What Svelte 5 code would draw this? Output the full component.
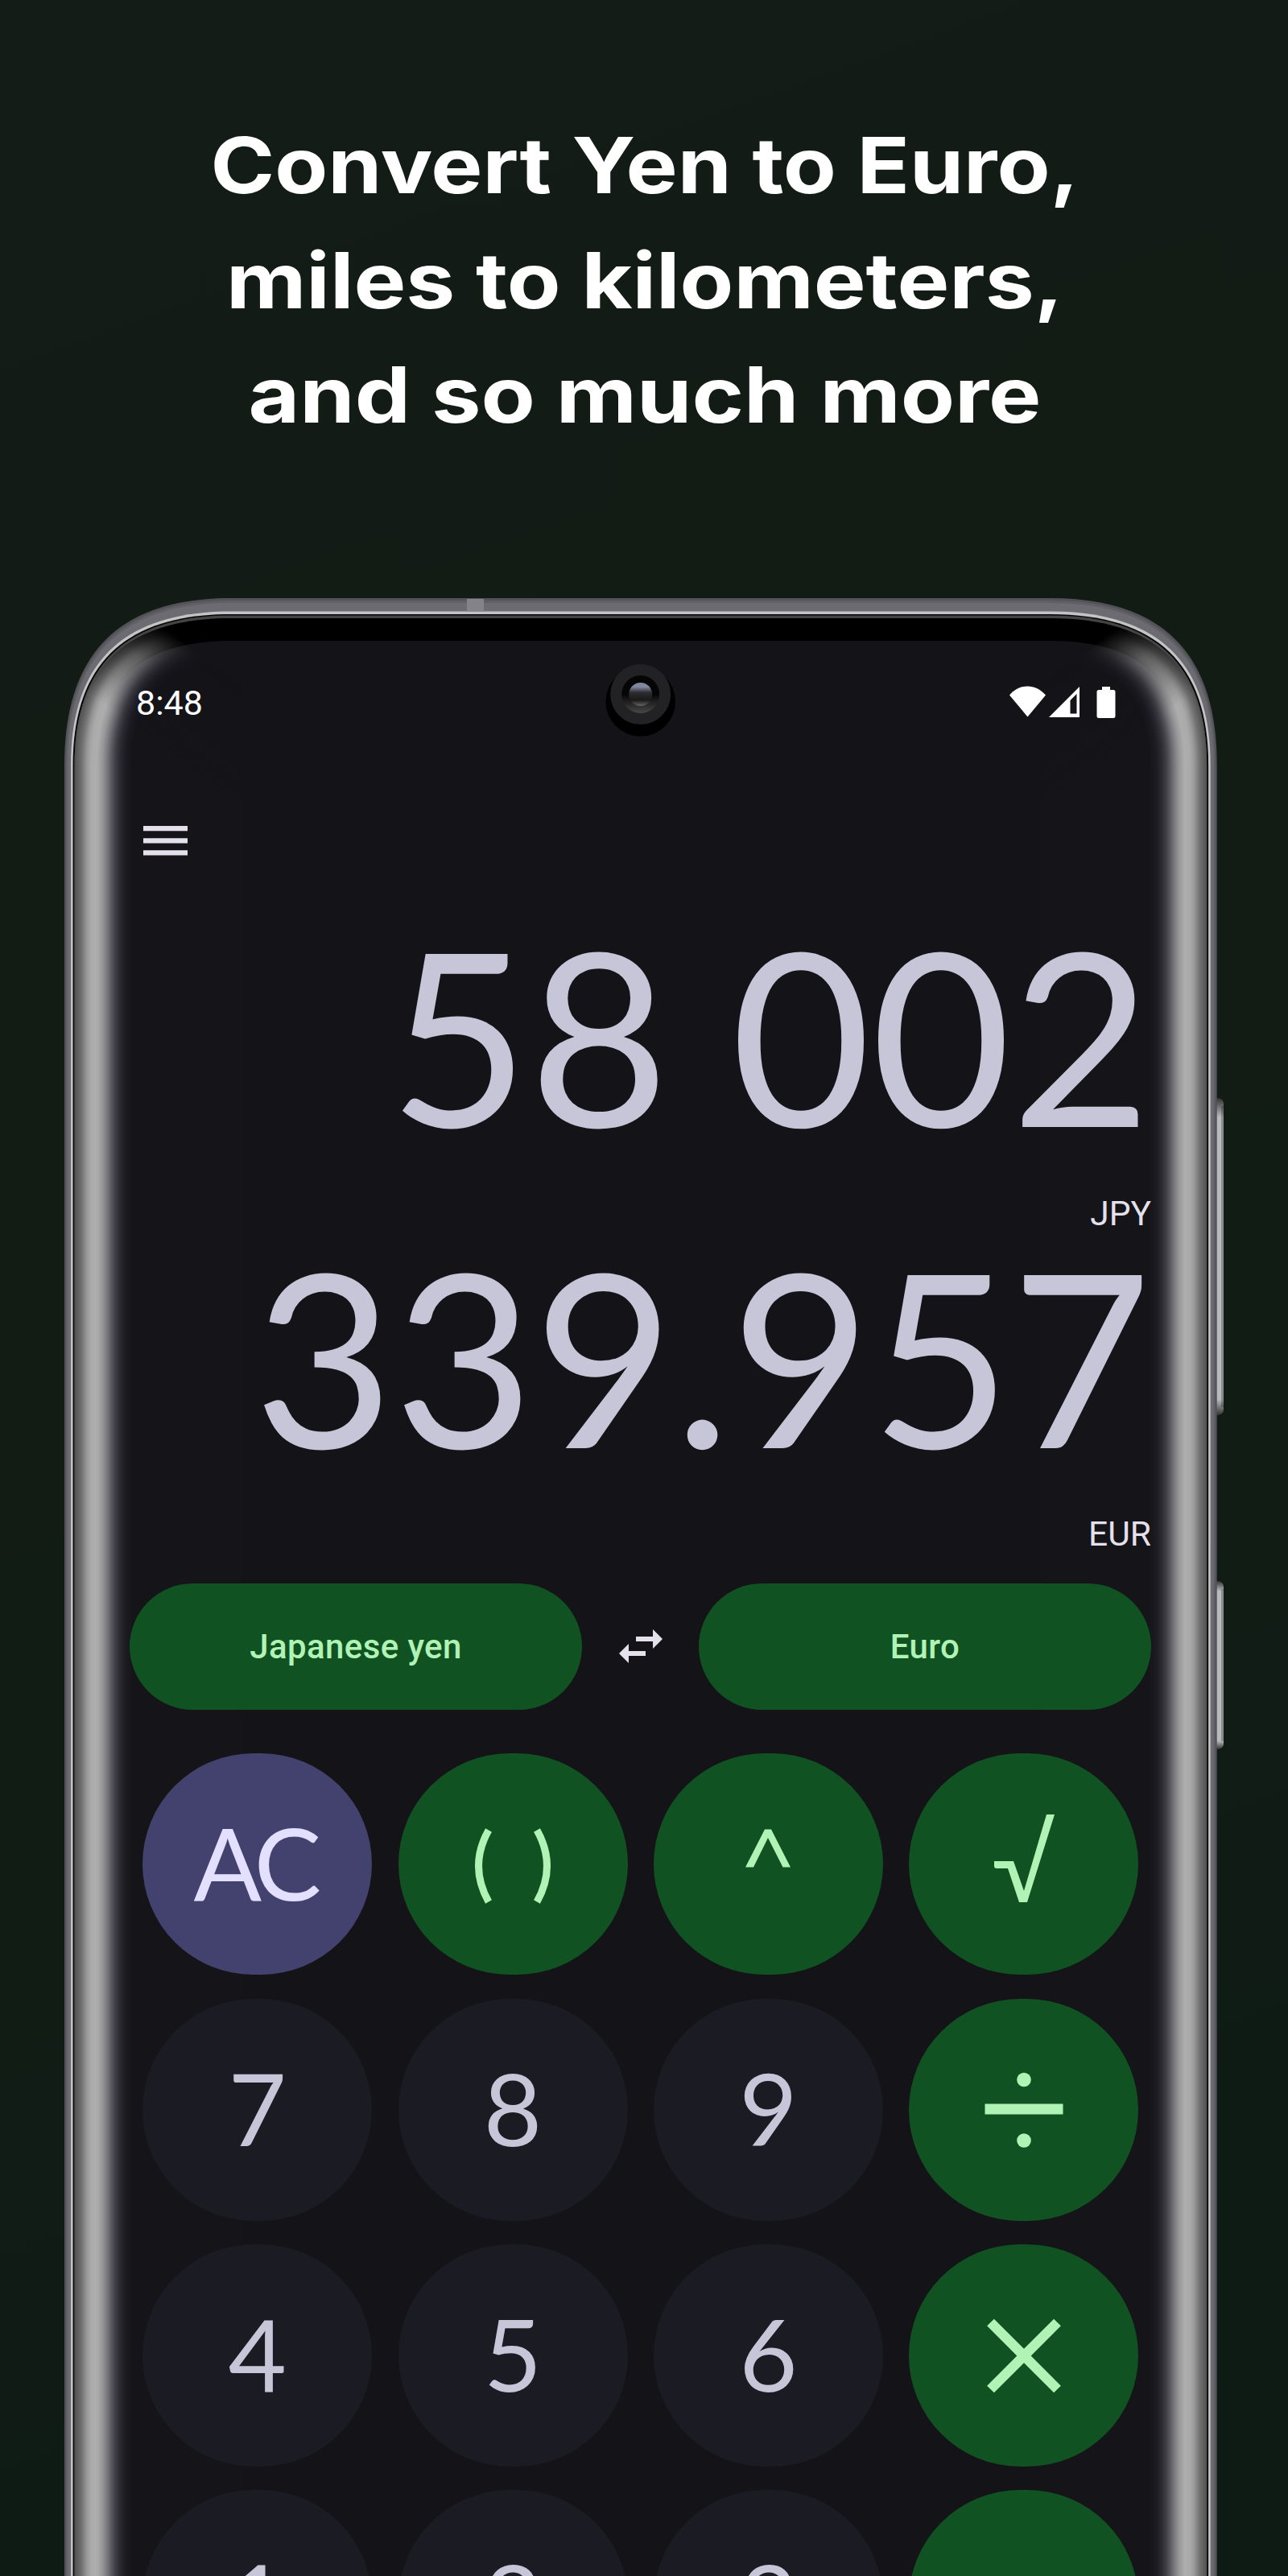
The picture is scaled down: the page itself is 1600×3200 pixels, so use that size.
<script>
  const headline = [
    { text: 'Convert Yen to Euro,', width: 1079 },
    { text: 'miles to kilometers,', width: 1040 },
    { text: 'and so much more', width: 985 }
  ];

  const keys = [
    { label: 'AC', kind: 'clear' },
    { icon: 'brackets', kind: 'op' },
    { icon: 'power', kind: 'op' },
    { icon: 'root', kind: 'op' },
    { label: '7' }, { label: '8' }, { label: '9' },
    { icon: 'divide', kind: 'op' },
    { label: '4' }, { label: '5' }, { label: '6' },
    { icon: 'multiply', kind: 'op' },
    { label: '1' }, { label: '2' }, { label: '3' },
    { icon: 'minus', kind: 'op' }
  ];

  // Outline of the phone body, inset from its sides and its top edge.
  function shell(dx, dy) {
    const k = 0.33;
    const l = 80 + dx;
    const r = 1511.7 - dx;
    const y = 743 + dy;
    const rx = 207 - dx;
    const ry = 207 - dy;
    return `M${l} 3240V${y + ry}C${l} ${y + ry * k} ${l + rx * k} ${y} ${l + rx} ${y}` +
      `H${r - rx}C${r - rx * k} ${y} ${r} ${y + ry * k} ${r} ${y + ry}V3240Z`;
  }

  // Curved glass edge: [distance from glass border, colour]
  const stops = [
    [0, [82, 82, 82]],
    [8, [112, 112, 112]],
    [15, [152, 152, 152]],
    [20, [170, 170, 170]],
    [27, [174, 174, 174]],
    [34, [152, 152, 153]],
    [40, [122, 121, 126]],
    [45, [92, 91, 98]],
    [50, [64, 63, 70]],
    [56, [43, 42, 50]],
    [62, [30, 29, 36]],
    [73, [19, 19, 24]]
  ];
  const glass = [];
  for (let d = 0; d < 73; d += 1) {
    const i = stops.findIndex((s) => s[0] > d);
    const [a, b] = [stops[i - 1], stops[i]];
    const t = (d - a[0]) / (b[0] - a[0]);
    const c = a[1].map((v, n) => Math.round(v + (b[1][n] - v) * t));
    glass.push({ d: shell(12.5 + d, 24 + d * 0.8), color: `rgb(${c.join(',')})` });
  }
</script>

<main class="page">
  <h1 class="headline">
    {#each headline as line}
      <svg class="headline-line" viewBox="0 0 1200 142.5" aria-label={line.text}>
        <text x="601" y="106" text-anchor="middle" textLength={line.width} lengthAdjust="spacingAndGlyphs">{line.text}</text>
      </svg>
    {/each}
  </h1>

  <svg class="body" viewBox="0 0 1600 3200" aria-hidden="true">
    <defs>
      <linearGradient id="fade-left" gradientUnits="userSpaceOnUse" x1="207" y1="782" x2="135" y2="880">
        <stop offset="0" stop-color="#000" />
        <stop offset="0.4" stop-color="#888" />
        <stop offset="1" stop-color="#fff" />
      </linearGradient>
      <linearGradient id="fade-right" gradientUnits="userSpaceOnUse" x1="1384.7" y1="782" x2="1456.7" y2="880">
        <stop offset="0" stop-color="#000" />
        <stop offset="0.4" stop-color="#888" />
        <stop offset="1" stop-color="#fff" />
      </linearGradient>
      <mask id="edge" maskUnits="userSpaceOnUse" x="0" y="700" width="1600" height="2600">
        <rect y="700" width="300" height="2600" fill="url(#fade-left)" />
        <rect x="1292" y="700" width="308" height="2600" fill="url(#fade-right)" />
      </mask>
      <linearGradient id="rocker" x1="0" y1="0" x2="0" y2="1">
        <stop offset="0" stop-color="#333" />
        <stop offset="0.06" stop-color="#b9babd" />
        <stop offset="0.95" stop-color="#b9babd" />
        <stop offset="1" stop-color="#333" />
      </linearGradient>
      <linearGradient id="lens" x1="0" y1="0" x2="0" y2="1">
        <stop offset="0" stop-color="#7f86a0" />
        <stop offset="0.18" stop-color="#8288a0" />
        <stop offset="0.42" stop-color="#2c2c31" />
        <stop offset="0.75" stop-color="#1a1a1a" />
        <stop offset="1" stop-color="#666" />
      </linearGradient>
      <linearGradient id="ring" x1="0" y1="0" x2="0" y2="1">
        <stop offset="0.5" stop-color="#050505" />
        <stop offset="1" stop-color="#484848" />
      </linearGradient>
    </defs>
    <rect x="1506" y="1364" width="14" height="394" rx="7" fill="url(#rocker)" />
    <rect x="1517" y="1374" width="3" height="374" fill="#000" opacity="0.25" />
    <rect x="1506" y="1964" width="14" height="209" rx="7" fill="url(#rocker)" />
    <rect x="1517" y="1974" width="3" height="189" fill="#000" opacity="0.25" />
    <path d={shell(0, 0)} fill="#535257" />
    <path d={shell(2, 3)} fill="#605f65" />
    <path d={shell(4, 6)} fill="#6c6b71" />
    <path d={shell(8, 16.5)} fill="#c4c4c6" />
    <path d={shell(10.6, 20)} fill="#050505" />
    <path d={shell(12.5, 21.5)} fill="#444" />
    <path d={shell(12.9, 25)} fill="#000" />
    <path d={shell(40, 53)} fill="#131318" />
    <g mask="url(#edge)">
      {#each glass as layer}
        <path d={layer.d} fill={layer.color} />
      {/each}
    </g>
    <rect x="580" y="744" width="21" height="15.500" fill="#84838a" />
    <circle cx="795.7" cy="871.5" r="43.3" fill="#000" />
    <circle cx="795.7" cy="862.5" r="37.5" fill="#222224" />
    <circle cx="795.7" cy="862.5" r="23.5" fill="url(#ring)" />
    <circle cx="795.7" cy="862.5" r="14.5" fill="url(#lens)" />
  </svg>

  <section class="screen">
    <header class="status">
      <span>8:48</span>
      <svg class="status-icons" viewBox="0 0 133 42">
        <path d="M0 11.5C13-3.2 32-3.2 45 11.5L22.5 38.5Z" fill="#fff" />
        <path fill-rule="evenodd" d="M49 39L87 1V39ZM75.500 18V34.500H83.500V10Z" fill="#fff" />
        <path d="M115 1h10v4h4a2.500 2.500 0 0 1 2.500 2.500v30a2.500 2.500 0 0 1-2.500 2.500h-18a2.500 2.500 0 0 1-2.500-2.500v-30a2.500 2.500 0 0 1 2.500-2.500h4z" fill="#fff" />
      </svg>
    </header>
    <svg class="menu" viewBox="0 0 55 37">
      <path d="M0 3.200H55M0 18.300H55M0 33.400H55" stroke="#e4e1ec" stroke-width="6.300" />
    </svg>

    <div class="readout">
      <div class="amount">58 002</div>
      <div class="unit">JPY</div>
      <div class="amount">339.957</div>
      <div class="unit">EUR</div>
    </div>

    <div class="units">
      <button>Japanese yen</button>
      <svg class="swap" viewBox="0 0 24 24">
        <path d="M6.990 11L3 15l3.990 4v-3H14v-2H6.990v-3zM21 9l-3.990-4v3H10v2h7.010v3L21 9z" fill="#e4e1ec" />
      </svg>
      <button>Euro</button>
    </div>

    <div class="keypad">
      {#each keys as key}
        <button class="key {key.kind ?? 'digit'}">
          {#if key.label}
            <span>{key.label}</span>
          {:else}
            <svg viewBox="-60 -70 120 140">
              {#if key.icon === 'brackets'}
                <path d="M-30 -42.500Q-55 2 -30 46.500M30 -42.500Q55 2 30 46.500" stroke-width="9" />
              {:else if key.icon === 'power'}
                <path class="solid" d="M-28 3.500L-4-43.500H4L28 3.500H18.500L0-33L-18 3.500Z" />
              {:else if key.icon === 'root'}
                <path class="solid" d="M-37-4H-13L0 33L28-62H38L4 47H-6L-20 5H-34Q-37 5-37 2Z" />
              {:else if key.icon === 'divide'}
                <path d="M-48.500 -1H48.500" stroke-width="13" />
                <circle class="solid" cx="0" cy="-37.500" r="8.800" />
                <circle class="solid" cx="0" cy="38" r="8.800" />
              {:else if key.icon === 'multiply'}
                <path d="M-41.500 -41L41.500 42M41.500 -41L-41.500 42" stroke-width="12.300" />
              {:else}
                <path d="M-48.500 0H48.500" stroke-width="13" />
              {/if}
            </svg>
          {/if}
        </button>
      {/each}
    </div>
  </section>
</main>

<style>
  :global(body) {
    margin: 0;
    background: #121c15;
  }
  .page {
    position: relative;
    box-sizing: border-box;
    width: 1600px;
    height: 3200px;
    overflow: hidden;
    padding-top: 134px;
    background: linear-gradient(160deg, #131c16 0%, #111c14 55%, #0d1b14 100%);
  }
  .headline {
    display: flex;
    flex-direction: column;
    align-items: center;
    height: 662px;
    margin: 0;
    font: 700 96px Inter, "Open Sans", sans-serif;
  }
  .headline-line {
    width: 1200px;
    height: 142.5px;
    fill: #fff;
  }
  .body {
    position: absolute;
    inset: 0;
    width: 1600px;
    height: 3200px;
  }
  .screen {
    position: relative;
    display: flex;
    flex-direction: column;
    width: 1269px;
    margin-left: 161px;
    color: #e4e1ec;
    font-family: Roboto, sans-serif;
  }
  .status {
    display: flex;
    justify-content: space-between;
    align-items: center;
    height: 60px;
    padding: 47px 43px 0 8px;
    color: #fff;
    font-size: 43px;
    line-height: 60px;
  }
  .status-icons {
    width: 133px;
    height: 42px;
  }
  .menu {
    width: 55px;
    height: 37px;
    margin: 122.5px 0 0 17px;
  }
  .readout {
    padding-top: 71.5px;
    text-align: right;
  }
  .amount {
    color: #c7c5d8;
    font-family: Lato, sans-serif;
    font-size: 300px;
    line-height: 300px;
    white-space: pre;
  }
  .unit {
    margin-top: 48.6px;
    font-size: 42.5px;
    line-height: 50px;
  }
  .units {
    display: grid;
    grid-template-columns: 562px 1fr 562px;
    align-items: center;
    justify-items: center;
    margin-top: 35.5px;
    height: 157px;
  }
  .units button {
    width: 562px;
    height: 157px;
    border: 0;
    border-radius: 79px;
    background: #115223;
    color: #b0f3b5;
    font: 500 42px Roboto, sans-serif;
    letter-spacing: 0.4px;
  }
  .swap {
    width: 72px;
    height: 72px;
  }
  .keypad {
    display: grid;
    grid-template-columns: repeat(4, 285px);
    grid-auto-rows: 275.7px;
    gap: 29.5px 32.3px;
    margin: 54px 0 0 16.300px;
  }
  .key {
    display: grid;
    place-items: center;
    padding: 0;
    border: 0;
    border-radius: 138px;
    background: #1b1b23;
    color: #c7c5d8;
    font: 400 125px/1 Lato, sans-serif;
  }
  .key span {
    padding-bottom: 5px;
  }
  .key.clear {
    background: #43426e;
    color: #e2dfff;
  }
  .key.clear span {
    margin-right: 7px;
    letter-spacing: -7px;
  }
  .key.op {
    background: #115223;
    color: #b0f3b5;
  }
  .key svg {
    width: 120px;
    height: 140px;
    fill: none;
    stroke: currentColor;
  }
  .key .solid {
    fill: currentColor;
    stroke: none;
  }
</style>
